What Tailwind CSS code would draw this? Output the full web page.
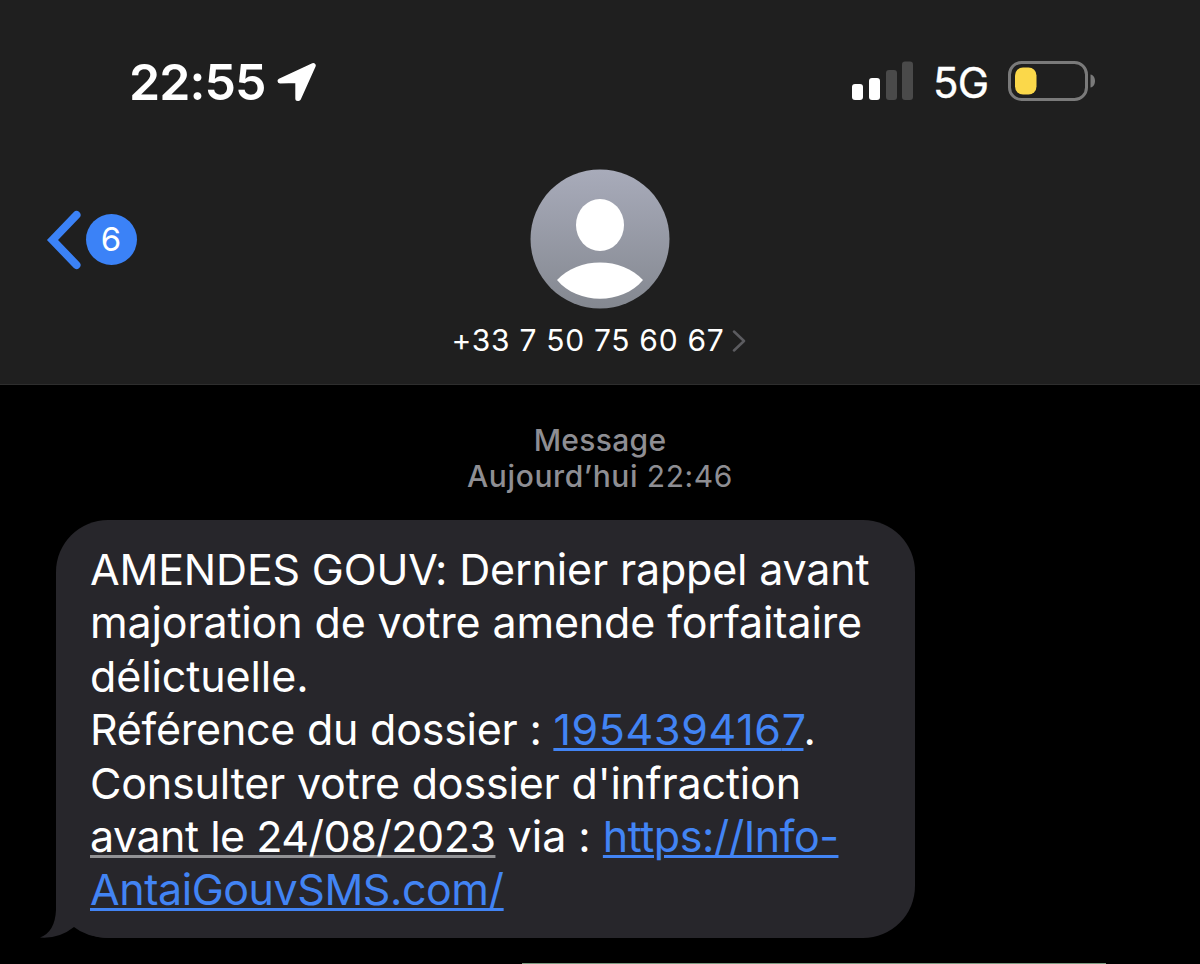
<!DOCTYPE html>
<html lang="fr">
<head>
  <meta charset="UTF-8">
  <meta name="viewport" content="width=device-width, initial-scale=1.0">
  <title>Messages</title>
  <script src="https://cdn.jsdelivr.net/npm/@tailwindcss/browser@4"></script>
</head>
<body class="bg-black font-['Inter',sans-serif] text-white">
  <div class="w-[1200px] h-[964px] overflow-hidden flex flex-col">
    <header class="h-[385px] shrink-0 bg-[#1f1f1f] border-b border-[#2e2e2e]">
      <!-- Barre d'état -->
      <div class="h-[162px] pl-[129px] pr-[104px] flex items-center justify-between">
        <div class="flex items-center">
          <span class="w-[138px] mt-0.5 text-[50px] leading-none font-semibold tracking-[-0.9px] whitespace-nowrap">22:55</span>
          <svg class="ml-2.5 mt-0.5" width="40" height="40" viewBox="0 0 40 40" fill="#fff" stroke="#fff" stroke-width="5" stroke-linejoin="round"><path d="M3 19 L36.300 3.500 L21.500 36.500 L20.800 36.500 L20.800 18.500 Z"/></svg>
        </div>
        <div class="flex items-center">
          <svg width="62" height="40" viewBox="0 0 62 40">
            <rect x="0" y="23" width="11" height="16" rx="3" fill="#fff"/>
            <rect x="17" y="17" width="11" height="22" rx="3" fill="#fff"/>
            <rect x="34" y="9" width="11" height="30" rx="3" fill="#4a4a4a"/>
            <rect x="50" y="0.5" width="11" height="38.5" rx="3" fill="#4a4a4a"/>
          </svg>
          <span class="ml-[19px] mt-1 w-[57px] text-[42px] leading-none font-normal tracking-[-0.8px] [-webkit-text-stroke:0.4px_white]">5G</span>
          <svg class="ml-[18px]" width="88" height="40" viewBox="0 0 88 40">
            <rect x="1.5" y="1.500" width="77" height="37" rx="12" fill="none" stroke="#7a7a7a" stroke-width="3"/>
            <rect x="7" y="6.500" width="21.500" height="27" rx="8" fill="#fbd84a"/>
            <path d="M82.500 13.500 C88.500 14.500 88.500 25.500 82.500 26.500 Z" fill="#7a7a7a"/>
          </svg>
        </div>
      </div>
      <!-- Contact -->
      <div class="pt-0.5 px-[46px] grid grid-cols-[1fr_auto_1fr]">
        <div class="flex items-center h-[151px]">
          <svg width="36" height="60" viewBox="0 0 36 60" fill="none" stroke="#3b82f7" stroke-width="8" stroke-linecap="round" stroke-linejoin="miter"><path d="M30.500 5 L6.500 30 L30.500 55"/></svg>
          <span class="ml-[3.5px] size-[51px] rounded-full bg-[#3b82f7] flex items-center justify-center text-[33px] leading-none">6</span>
        </div>
        <div class="flex flex-col items-center pt-1">
          <svg width="142" height="142" viewBox="0 0 142 142">
            <defs>
              <linearGradient id="avatar" x1="0" y1="0" x2="0" y2="1">
                <stop offset="0" stop-color="#a8abba"/>
                <stop offset="1" stop-color="#848890"/>
              </linearGradient>
            </defs>
            <circle cx="71" cy="71" r="69.500" fill="url(#avatar)"/>
            <ellipse cx="71" cy="57" rx="24" ry="26" fill="#fff"/>
            <path d="M28 112 C49 88.500 93 88.500 114 112 C93 137 49 137 28 112 Z" fill="#fff"/>
          </svg>
          <div class="flex items-center mt-3 -ml-0.5">
            <span class="text-[30px] leading-9 tracking-[0.7px] whitespace-nowrap">+33 7 50 75 60 67</span>
            <svg class="ml-2 mt-0.5" width="14" height="22" viewBox="0 0 14 22" fill="none" stroke="#5c5c60" stroke-width="2.500" stroke-linecap="round" stroke-linejoin="round"><path d="M2 1.500 L12 11 L2 20.500"/></svg>
          </div>
        </div>
      </div>
    </header>

    <main class="grow flex flex-col">
      <div class="mt-[37px] text-center text-[30px] leading-9 font-medium text-[#8e8e93]">
        <p class="tracking-[0.3px]">Message</p>
        <p class="tracking-[0.6px]">Aujourd’hui <span class="font-normal">22:46</span></p>
      </div>

      <!-- Message reçu -->
      <div class="relative ml-14 mt-[26px] w-[859px] h-[418px] shrink-0 rounded-[52px] bg-[#27262b] pl-[34px] pt-[23px] text-[43px] leading-[53.4px] whitespace-nowrap">
        <svg class="absolute left-[-16px] bottom-0" width="80" height="70" viewBox="0 0 80 70">
          <path d="M16 0 L16 42 Q15 64 0 69.500 Q19 71 34 59 Q46 69 68 70 L80 70 L80 0 Z" fill="#27262b"/>
        </svg>
        <div class="relative">
          <p class="tracking-[-0.18px]">AMENDES GOUV: Dernier rappel avant</p>
          <p class="tracking-[-0.15px]">majoration de votre amende forfaitaire</p>
          <p class="tracking-[-0.1px]">délictuelle.</p>
          <p class="tracking-[-0.25px]">Référence du dossier : <span class="text-[#4284f4] tracking-[0.65px] underline decoration-3 underline-offset-3">195439416</span><span class="text-[#4284f4] tracking-[-2.5px] underline decoration-3 underline-offset-3">7</span>.</p>
          <p class="tracking-[-0.18px]">Consulter votre dossier d'infraction</p>
          <p><span class="tracking-[-0.5px] underline decoration-3 decoration-[#929295] underline-offset-3">avant le 24/08/2023</span> via : <span class="text-[#4284f4] tracking-[-0.5px] underline decoration-3 underline-offset-3">https://Info-</span></p>
          <p><span class="text-[#4284f4] tracking-[-0.45px] underline decoration-3 underline-offset-3">AntaiGouvSMS.com/</span></p>
        </div>
      </div>

      <!-- Haut du message suivant -->
      <div class="mt-[25px] ml-[522px] w-[584px] h-px shrink-0 bg-[#7b9a80]"></div>
    </main>
  </div>
</body>
</html>
